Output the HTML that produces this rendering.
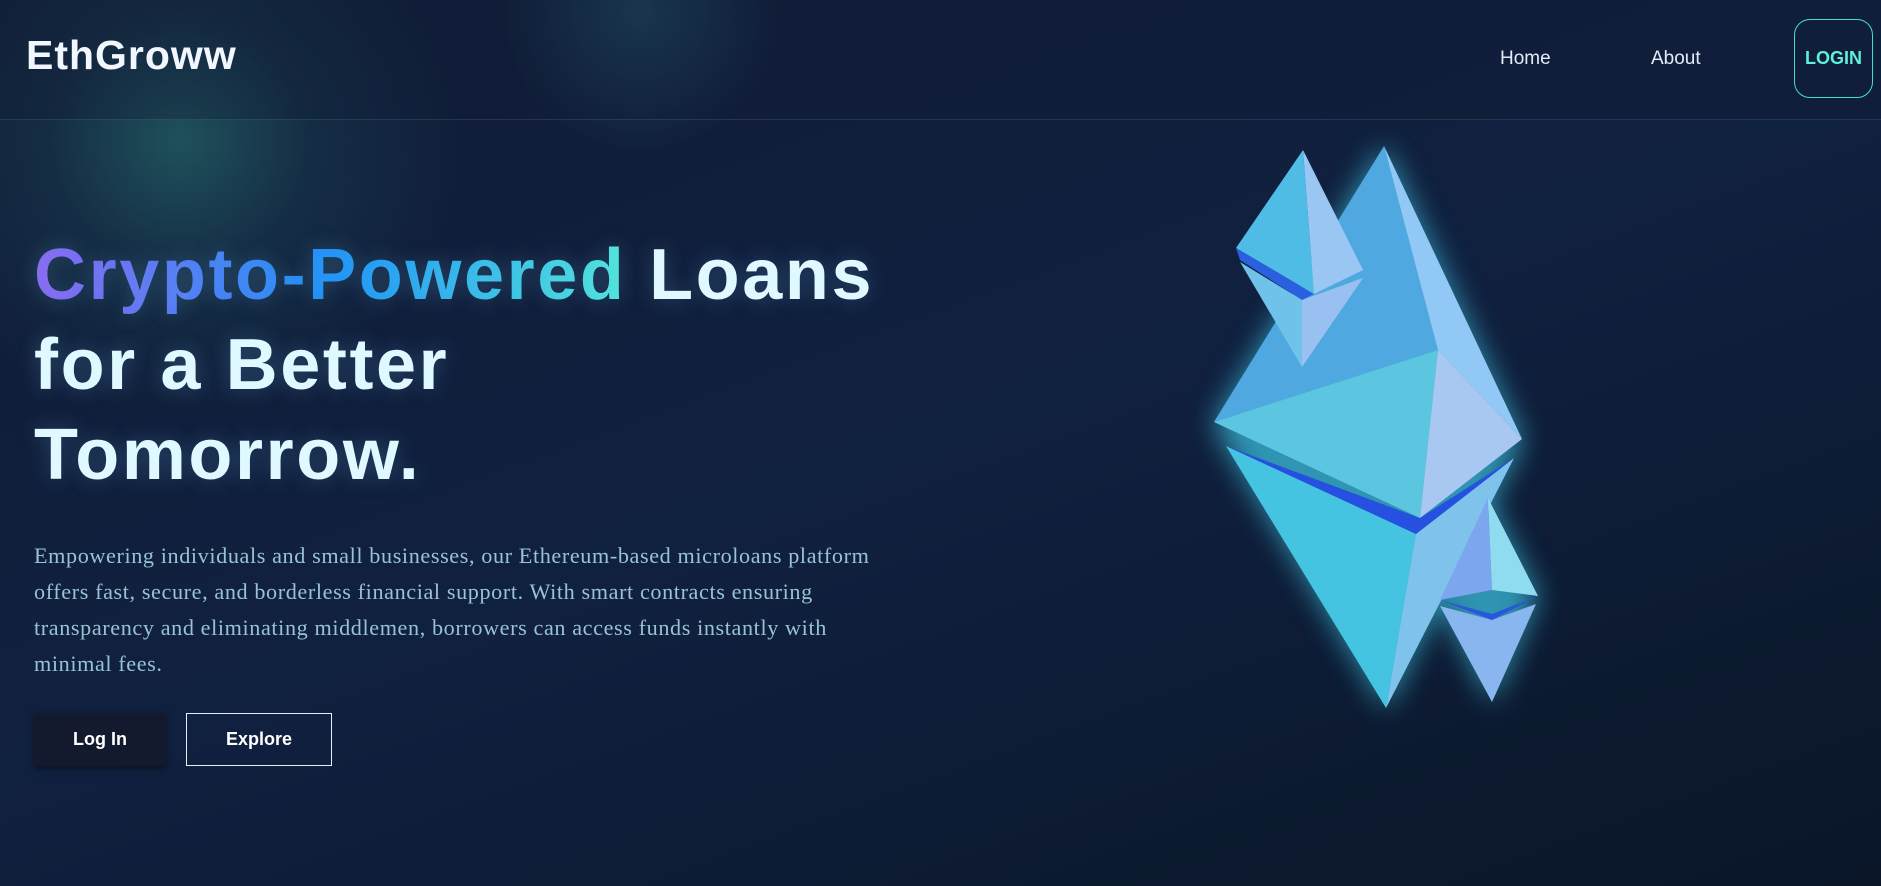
<!DOCTYPE html>
<html><head><meta charset="utf-8"><style>
*{margin:0;padding:0;box-sizing:border-box}
html,body{width:1881px;height:886px;overflow:hidden}
body{background:radial-gradient(circle at 180px 140px,rgba(40,115,115,.6) 0,rgba(30,80,95,.3) 130px,rgba(0,0,0,0) 280px),radial-gradient(circle at 640px 10px,rgba(40,95,115,.55) 0,rgba(0,0,0,0) 140px),linear-gradient(160deg,#111d36 0%,#10203f 50%,#0a1628 100%);font-family:"Liberation Sans",sans-serif;position:relative}
.hdr{position:absolute;left:0;top:0;width:1881px;height:120px;border-bottom:1px solid rgba(80,140,160,.25);background:rgba(15,28,52,.3)}
.logo{position:absolute;left:26px;top:32px;font-size:41px;color:#f2f6ff;letter-spacing:1px;font-weight:bold}
.nav{position:absolute;top:48px;font-size:19px;color:#e4ecf8}
.login{position:absolute;left:1794px;top:19px;width:79px;height:79px;border:1.5px solid #3fe0cf;border-radius:16px;color:#5ff0d8;font-weight:bold;font-size:18px;display:flex;align-items:center;justify-content:center}
h1{position:absolute;left:34px;top:230px;font-size:72px;line-height:90px;color:#e0f8ff;font-weight:bold;letter-spacing:2.6px;text-shadow:0 0 20px rgba(120,200,255,.25);white-space:nowrap}
.g{background:linear-gradient(90deg,#8a63f0,#1a8ff5 50%,#4fe8d8);-webkit-background-clip:text;color:transparent}
p{position:absolute;left:34px;top:538px;width:900px;font-family:"Liberation Serif",serif;font-size:22.2px;line-height:36px;color:#97c3d3;letter-spacing:0.6px;white-space:nowrap}
.b1{position:absolute;left:34px;top:713px;width:132px;height:53px;background:#141a2e;color:#fff;font-size:18px;font-weight:bold;display:flex;align-items:center;justify-content:center;box-shadow:0 3px 6px rgba(0,0,0,.4)}
.b2{position:absolute;left:186px;top:713px;width:146px;height:53px;border:1.5px solid #e8eef8;color:#fff;font-size:18px;font-weight:bold;display:flex;align-items:center;justify-content:center}
svg{position:absolute;left:0;top:0}
</style></head><body>
<div class="hdr"></div>
<div class="logo">EthGroww</div>
<div class="nav" style="left:1500px">Home</div>
<div class="nav" style="left:1651px">About</div>
<div class="login">LOGIN</div>
<h1><span class="g">Crypto-Powered</span> Loans<br>for a Better<br>Tomorrow.</h1>
<p>Empowering individuals and small businesses, our Ethereum-based microloans platform<br>offers fast, secure, and borderless financial support. With smart contracts ensuring<br>transparency and eliminating middlemen, borrowers can access funds instantly with<br>minimal fees.</p>
<div class="b1">Log In</div>
<div class="b2">Explore</div>
<svg width="1881" height="886">
<defs>
<filter id="gl" x="-30%" y="-30%" width="160%" height="160%"><feGaussianBlur stdDeviation="14"/></filter>
</defs>
<g filter="url(#gl)" opacity=".7"><polygon points="1384,146 1522,439 1514,458 1386,708 1226,446 1214,422" fill="#3ec8e6"/><polygon points="1488,498 1538,596 1492,702 1440,600" fill="#3ec8e6"/></g>
<polygon points="1226,446 1416,534 1386,708" fill="#45c4e2"/>
<polygon points="1416,534 1514,458 1386,708" fill="#7fc3ec"/>
<polygon points="1226,446 1416,534 1514,458 1420,518" fill="#2550e0"/>
<polygon points="1384,146 1214,422 1438,350" fill="#4fa8e0"/>
<polygon points="1384,146 1438,350 1522,439" fill="#92c8f5"/>
<polygon points="1214,422 1438,350 1420,518" fill="#5cc6e0"/>
<polygon points="1438,350 1522,439 1420,518" fill="#a8c8f2"/>
<polygon points="1303,150 1236,248 1314,294" fill="#4fbce6"/>
<polygon points="1303,150 1314,294 1363,270" fill="#9ac6f4"/>
<polygon points="1236,248 1314,294 1302,300 1240,260" fill="#2a60e0"/>
<polygon points="1240,262 1302,300 1302,367" fill="#6fc2ea"/>
<polygon points="1302,300 1363,278 1302,367" fill="#98c0f0"/>
<polygon points="1488,498 1440,600 1492,590" fill="#7ca6ee"/>
<polygon points="1488,498 1492,590 1538,596" fill="#8fdcf0"/>
<polygon points="1440,606 1492,620 1536,604 1492,702" fill="#8ab6f0"/>
<polygon points="1440,600 1492,614 1538,596 1492,620" fill="#2a55dd"/>
</svg>
</body></html>
